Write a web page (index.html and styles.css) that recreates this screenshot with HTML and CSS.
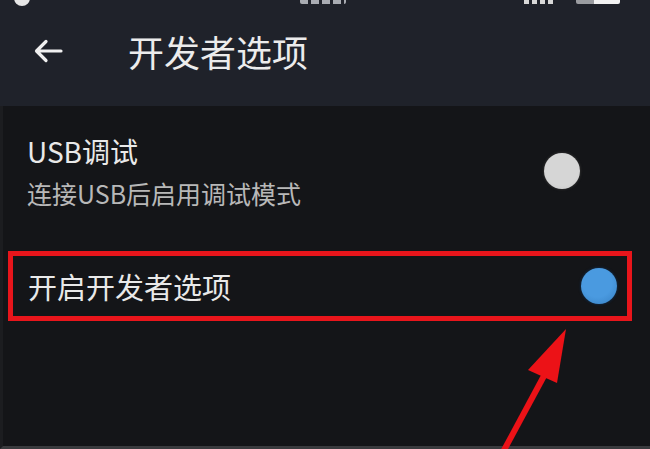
FILE: index.html
```html
<!DOCTYPE html>
<html lang="zh-CN">
<head>
<meta charset="utf-8">
<title>开发者选项</title>
<link rel="stylesheet" href="styles.css">
</head>
<body>
<div class="screen">
  <header class="appbar">
    <div class="statusbar">
      <span class="st-dot"></span>
      <span class="st-time"></span>
      <span class="st-icons"><span class="st-sig"></span><span class="st-bat"></span></span>
    </div>
    <div class="toolbar">
      <svg class="back" width="30" height="24" viewBox="0 0 30 24" aria-hidden="true">
        <path d="M28 12H4M13 2.5L3.5 12L13 21.5" fill="none" stroke="#f0f0f0" stroke-width="3.2" stroke-linecap="round" stroke-linejoin="round"/>
      </svg>
      <h1 class="title">开发者选项</h1>
    </div>
  </header>
  <main class="content">
    <div class="row row-usb">
      <div class="texts">
        <div class="row-title">USB调试</div>
        <div class="row-sub">连接USB后启用调试模式</div>
      </div>
      <span class="knob knob-off"></span>
    </div>
    <div class="row row-dev">
      <div class="row-title dev-title">开启开发者选项</div>
      <span class="knob knob-on"></span>
    </div>
    <svg class="arrow" width="650" height="449" viewBox="0 0 650 449" aria-hidden="true">
      <line x1="503" y1="452" x2="545" y2="374" stroke="#ec1217" stroke-width="6"/>
      <polygon points="566,329 528,370 557,383" fill="#ec1217"/>
    </svg>
  </main>
</div>
</body>
</html>
```
FILE: styles.css
```css
html, body {
  margin: 0;
  padding: 0;
  background: #141518;
}
body {
  font-family: "Noto Sans CJK SC", "Noto Sans", sans-serif;
  color: #e8e8e8;
}
.screen {
  width: 650px;
  height: 449px;
  overflow: hidden;
  position: relative;
  display: flex;
  flex-direction: column;
  background: #141518;
}
.appbar {
  background: #1f222a;
  height: 106px;
  display: flex;
  flex-direction: column;
}
.statusbar {
  height: 7px;
  overflow: hidden;
  display: flex;
  align-items: flex-end;
  padding: 0 30px 0 14px;
}
.st-dot {
  width: 16px;
  height: 16px;
  border-radius: 50%;
  background: #e6e6e6;
  margin-bottom: 1px;
}
.st-time {
  width: 46px;
  height: 12px;
  margin: 0 0 3px 270px;
  background: repeating-linear-gradient(90deg, #a9acb2 0 8px, transparent 8px 11px);
  border-radius: 2px;
}
.st-icons {
  margin-left: auto;
  display: flex;
  gap: 22px;
  align-items: flex-end;
  margin-bottom: 3px;
}
.st-sig {
  width: 30px;
  height: 14px;
  background: repeating-linear-gradient(90deg, #d8d8d8 0 5px, transparent 5px 8px);
}
.st-bat {
  width: 44px;
  height: 14px;
  background: linear-gradient(90deg, #9a9ca0 0 40%, #f2f2f2 40%);
  border-radius: 2px;
}
.toolbar {
  flex: 1;
  display: flex;
  align-items: center;
  padding-left: 33px;
  padding-bottom: 12px;
}
.back {
  display: block;
}
.title {
  margin: 0 0 0 65px;
  font-size: 36px;
  font-weight: 400;
  line-height: 44px;
  color: #ececec;
}
.content {
  flex: 1;
  position: relative;
  border-left: 3px solid #1c1d20;
  border-bottom: 3px solid #3a3b3e;
}
.row {
  display: flex;
  align-items: center;
  justify-content: space-between;
}
.row-usb {
  padding: 28px 70px 0 24px;
}
.texts {
  display: flex;
  flex-direction: column;
  gap: 10px;
}
.row-title {
  font-size: 28px;
  line-height: 34px;
  color: #e9e9e9;
}
.row-sub {
  font-size: 25px;
  line-height: 30px;
  color: #b8b8b8;
}
.knob {
  display: block;
  width: 36px;
  height: 36px;
  border-radius: 50%;
}
.knob-off {
  background: radial-gradient(circle at 50% 45%, #d6d6d6 0 60%, #c4c4c4 100%);
  box-shadow: 0 0 2px 1px #2a2a2a;
}
.knob-on {
  background: radial-gradient(circle at 45% 40%, #4a9ae0 0 50%, #357fc2 100%);
  box-shadow: 0 0 2px 1px #10243a;
}
.row-dev {
  margin: 43px 18px 0 5px;
  height: 60px;
  border: 5px solid #e8151b;
  padding: 0 10px 0 15px;
}
.dev-title {
  font-size: 29px;
  line-height: 36px;
}
.arrow {
  position: absolute;
  left: -3px;
  top: -106px;
  pointer-events: none;
}
```
